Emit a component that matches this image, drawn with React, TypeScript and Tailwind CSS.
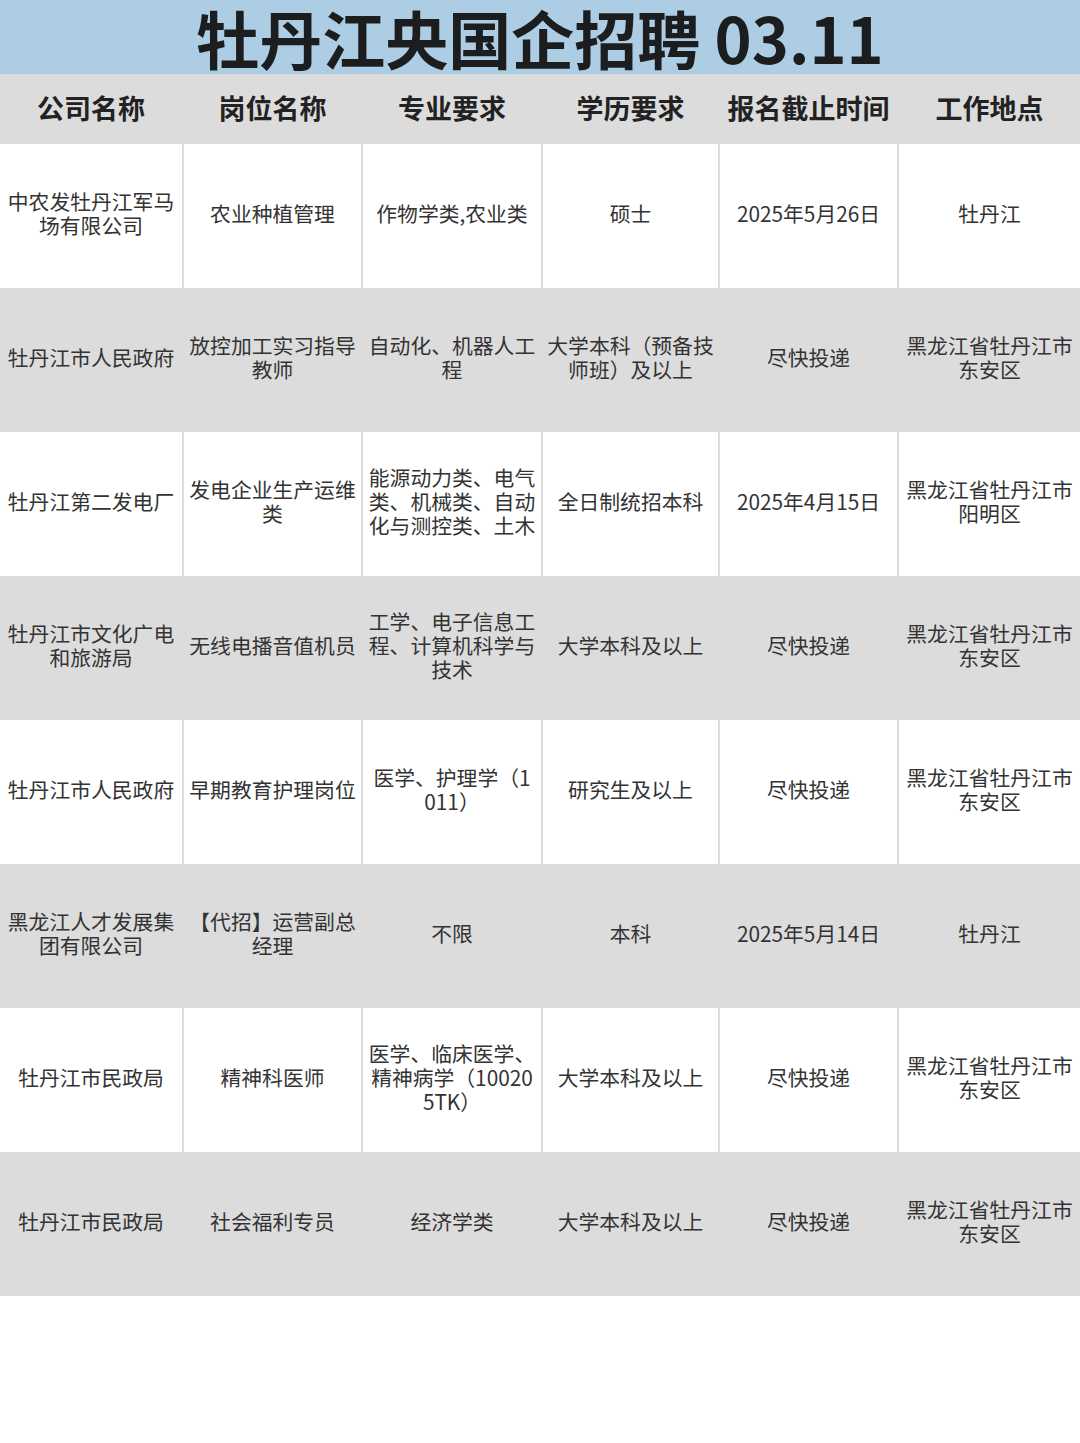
import React from "react";

type Row = { cells: string[]; gray: boolean };

const rows: Row[] = [
  { cells: ["中农发牡丹江军马场有限公司", "农业种植管理", "作物学类,农业类", "硕士", "2025年5月26日", "牡丹江"], gray: false },
  { cells: ["牡丹江市人民政府", "放控加工实习指导教师", "自动化、机器人工程", "大学本科（预备技师班）及以上", "尽快投递", "黑龙江省牡丹江市东安区"], gray: true },
  { cells: ["牡丹江第二发电厂", "发电企业生产运维类", "能源动力类、电气类、机械类、自动化与测控类、土木", "全日制统招本科", "2025年4月15日", "黑龙江省牡丹江市阳明区"], gray: false },
  { cells: ["牡丹江市文化广电和旅游局", "无线电播音值机员", "工学、电子信息工程、计算机科学与技术", "大学本科及以上", "尽快投递", "黑龙江省牡丹江市东安区"], gray: true },
  { cells: ["牡丹江市人民政府", "早期教育护理岗位", "医学、护理学（1011）", "研究生及以上", "尽快投递", "黑龙江省牡丹江市东安区"], gray: false },
  { cells: ["黑龙江人才发展集团有限公司", "【代招】运营副总经理", "不限", "本科", "2025年5月14日", "牡丹江"], gray: true },
  { cells: ["牡丹江市民政局", "精神科医师", "医学、临床医学、精神病学（100205TK）", "大学本科及以上", "尽快投递", "黑龙江省牡丹江市东安区"], gray: false },
  { cells: ["牡丹江市民政局", "社会福利专员", "经济学类", "大学本科及以上", "尽快投递", "黑龙江省牡丹江市东安区"], gray: true },
];

const headers = ["公司名称", "岗位名称", "专业要求", "学历要求", "报名截止时间", "工作地点"];

export default function App() {
  return (
    <div
      className="w-[1080px] min-h-[1443px] bg-white"
      style={{ fontFamily: '"Noto Sans CJK SC", "Noto Sans", sans-serif' }}
    >
      <div className="h-[74px] bg-[#adcde5] flex items-center justify-center">
        <h1 className="text-[63px] leading-[74px] font-bold text-[#1b1d1f] whitespace-nowrap">
          牡丹江央国企招聘 03.11
        </h1>
      </div>
      <div className="h-[70px] bg-[#dcdcdc] grid grid-cols-[182px_177px_178px_175px_177px_1fr] gap-x-[2px]">
        {headers.map((h) => (
          <div key={h} className="flex items-center justify-center pb-[2px] text-[27px] font-bold text-[#222222] whitespace-nowrap">
            {h}
          </div>
        ))}
      </div>
      <div className="bg-[#dcdcdc]">
        {rows.map((r, i) => (
          <div key={i} className="grid grid-cols-[182px_177px_178px_175px_177px_1fr] gap-x-[2px] h-[144px]">
            {r.cells.map((c, j) => (
              <div
                key={j}
                className={`${r.gray ? "bg-[#dcdcdc]" : "bg-white"} ${j === 2 ? "px-[5px]" : "px-[3px]"} flex items-center justify-center pb-[6px] text-center text-[20.8px] leading-[24px] text-[#333333] break-all`}
              >
                <span>{c}</span>
              </div>
            ))}
          </div>
        ))}
      </div>
    </div>
  );
}
